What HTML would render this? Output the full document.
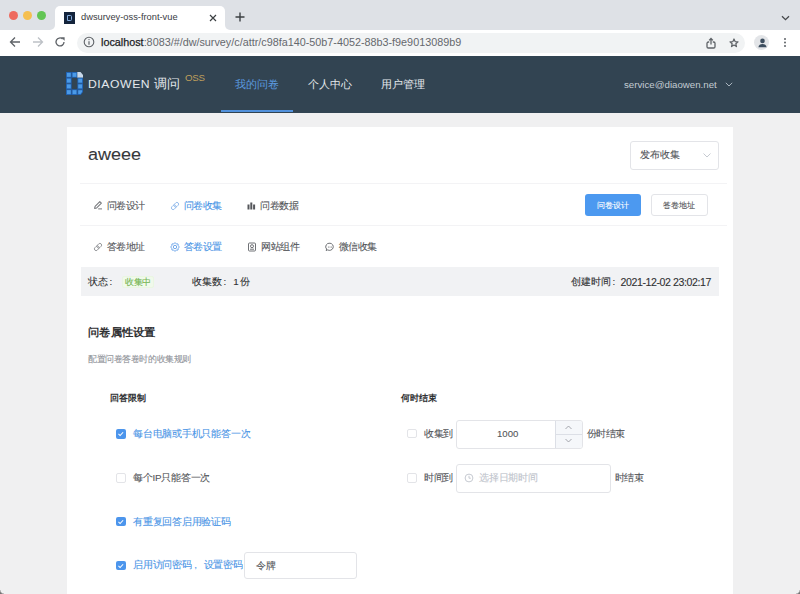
<!DOCTYPE html>
<html><head><meta charset="utf-8">
<style>
*{margin:0;padding:0;box-sizing:border-box}
html,body{width:800px;height:594px;overflow:hidden;background:#f0f0f1;font-family:"Liberation Sans",sans-serif;position:relative}
.a{position:absolute;white-space:nowrap}
</style></head><body>
<!-- ===== browser chrome ===== -->
<div class="a" style="left:0;top:0;width:800px;height:56px;background:#fff"></div><div class="a" style="left:0;top:0;width:55px;height:29.5px;background:#dee1e6;border-radius:0 0 5px 0"></div><div class="a" style="left:224.5px;top:0;width:576px;height:29.5px;background:#dee1e6;border-radius:0 0 0 5px"></div><div class="a" style="left:50px;top:0;width:180px;height:12px;background:#dee1e6"></div>
<div class="a" style="left:9px;top:11px;width:9px;height:9px;border-radius:50%;background:#ee6a5f"></div>
<div class="a" style="left:23px;top:11px;width:9px;height:9px;border-radius:50%;background:#f5bf4f"></div>
<div class="a" style="left:37px;top:11px;width:9px;height:9px;border-radius:50%;background:#62c554"></div>
<div class="a" style="left:55px;top:6px;width:169.5px;height:24px;background:#fff;border-radius:5px 5px 0 0"></div>
<div class="a" style="left:64px;top:12px;width:11px;height:11.5px;background:#14243c"></div>
<div class="a" style="left:67.2px;top:14.8px;width:4.8px;height:6px;border:1.6px solid #86afe0;border-radius:0 1.5px 1.5px 0"></div>
<div class="a" style="left:81px;top:11px;font-size:9.3px;line-height:13px;color:#3a3c3f">dwsurvey-oss-front-vue</div>
<svg class="a" style="left:209px;top:13.5px" width="8" height="8" viewBox="0 0 8 8"><path d="M1 1L7 7M7 1L1 7" stroke="#3c4043" stroke-width="1.2"/></svg>
<svg class="a" style="left:235px;top:12px" width="10" height="10" viewBox="0 0 10 10"><path d="M5 0.5V9.5M0.5 5H9.5" stroke="#3c4043" stroke-width="1.4"/></svg>
<svg class="a" style="left:780.5px;top:15px" width="9" height="6" viewBox="0 0 9 6"><path d="M1 1.2L4.5 4.6L8 1.2" stroke="#45484c" stroke-width="1.3" fill="none"/></svg>

<svg class="a" style="left:9px;top:36px" width="12" height="12" viewBox="0 0 12 12"><path d="M11 6H1.5M6 1.5L1.5 6L6 10.5" stroke="#5f6368" stroke-width="1.3" fill="none"/></svg>
<svg class="a" style="left:32px;top:36px" width="12" height="12" viewBox="0 0 12 12"><path d="M1 6H10.5M6 1.5L10.5 6L6 10.5" stroke="#bdc1c6" stroke-width="1.3" fill="none"/></svg>
<svg class="a" style="left:54px;top:36px" width="12" height="12" viewBox="0 0 12 12"><path d="M10 6A4 4 0 1 1 8.6 2.9" stroke="#5f6368" stroke-width="1.3" fill="none"/><path d="M7 1.2L10.6 1.2L10.6 4.8Z" fill="#5f6368"/></svg>
<div class="a" style="left:77px;top:32.5px;width:668px;height:20px;border-radius:10px;background:#f1f3f4"></div>
<svg class="a" style="left:83px;top:36px" width="12" height="12" viewBox="0 0 12 12"><circle cx="6" cy="6" r="4.8" stroke="#5f6368" stroke-width="1.1" fill="none"/><path d="M6 5.2V8.8" stroke="#5f6368" stroke-width="1.2"/><circle cx="6" cy="3.6" r="0.7" fill="#5f6368"/></svg>
<div class="a" style="left:101px;top:35.5px;font-size:10.8px;line-height:13px;color:#65686d"><span style="color:#202124;-webkit-text-stroke:0.25px #202124">localhost</span>:8083/#/dw/survey/c/attr/c98fa140-50b7-4052-88b3-f9e9013089b9</div>
<svg class="a" style="left:705px;top:36.5px" width="12" height="12" viewBox="0 0 12 12"><path d="M4.2 5H3.3A1.3 1.3 0 0 0 2 6.3V9.7A1.3 1.3 0 0 0 3.3 11H8.7A1.3 1.3 0 0 0 10 9.7V6.3A1.3 1.3 0 0 0 8.7 5H7.8M6 7.6V1.6M4.1 3.4L6 1.5L7.9 3.4" stroke="#5f6368" stroke-width="1.3" fill="none"/></svg>
<svg class="a" style="left:729px;top:38.2px" width="10" height="9.5" viewBox="0 0 12 11.4"><path d="M6 1.2L7.35 4.35L10.8 4.65L8.2 6.9L8.95 10.3L6 8.5L3.05 10.3L3.8 6.9L1.2 4.65L4.65 4.35Z" stroke="#5f6368" stroke-width="1.5" fill="none" stroke-linejoin="round"/></svg>
<div class="a" style="left:754px;top:35px;width:15px;height:15px;border-radius:50%;background:#e3e5e8"></div>
<svg class="a" style="left:755.5px;top:35.5px" width="13" height="13" viewBox="0 0 13 13"><circle cx="6.5" cy="4.9" r="2.3" fill="#3d4e5f"/><path d="M2.4 11.2C2.7 8.7 4.4 7.9 6.5 7.9C8.6 7.9 10.3 8.7 10.6 11.2Z" fill="#3d4e5f"/></svg>
<div class="a" style="left:784px;top:38px;width:2.2px;height:2.2px;border-radius:50%;background:#5f6368;box-shadow:0 3.5px 0 #5f6368,0 7px 0 #5f6368"></div>

<!-- ===== nav ===== -->
<div class="a" style="left:0;top:55.5px;width:800px;height:57px;background:#324452"></div>
<svg class="a" style="left:65.5px;top:71.8px" width="17" height="23" viewBox="0 0 17 23"><rect x="0.00" y="0.00" width="5.67" height="5.75" fill="#2060b0"/><rect x="0.90" y="0.90" width="3.87" height="3.95" fill="#4b9ae6"/><rect x="0.00" y="5.75" width="5.67" height="5.75" fill="#2060b0"/><rect x="0.90" y="6.65" width="3.87" height="3.95" fill="#4b9ae6"/><rect x="0.00" y="11.50" width="5.67" height="5.75" fill="#2060b0"/><rect x="0.90" y="12.40" width="3.87" height="3.95" fill="#4b9ae6"/><rect x="0.00" y="17.25" width="5.67" height="5.75" fill="#2060b0"/><rect x="0.90" y="18.15" width="3.87" height="3.95" fill="#4b9ae6"/><rect x="5.67" y="0.00" width="5.67" height="5.75" fill="#2060b0"/><rect x="6.57" y="0.90" width="3.87" height="3.95" fill="#4b9ae6"/><rect x="5.67" y="17.25" width="5.67" height="5.75" fill="#2060b0"/><rect x="6.57" y="18.15" width="3.87" height="3.95" fill="#4b9ae6"/><path d="M11.33 0.00H14.53L17 2.9V5.75H11.33Z" fill="#c9d9ea"/><rect x="11.33" y="5.75" width="5.67" height="5.75" fill="#2060b0"/><rect x="12.23" y="6.65" width="3.87" height="3.95" fill="#4b9ae6"/><rect x="11.33" y="11.50" width="5.67" height="5.75" fill="#2060b0"/><rect x="12.23" y="12.40" width="3.87" height="3.95" fill="#4b9ae6"/><path d="M11.33 17.25H17V20.05L14.73 23H11.33Z" fill="#2060b0"/><path d="M12.23 18.15H16.1V19.85L14.53 22.1H12.23Z" fill="#4b9ae6"/></svg>
<div class="a" style="left:88px;top:76px;font-size:10.7px;line-height:16px;color:#e3e8ec;letter-spacing:0.5px;transform:scaleX(1.14);transform-origin:0 0;font-weight:500">DIAOWEN</div><div class="a" style="left:154px;top:75.5px;font-size:12.5px;line-height:16px;color:#e3e8ec">调问</div>
<div class="a" style="left:185px;top:72px;font-size:9px;line-height:12px;color:#bf9f5c;letter-spacing:-0.2px;transform:scaleX(1.08);transform-origin:0 0">OSS</div>
<div class="a" style="left:235px;top:77px;font-size:11px;line-height:14px;color:#5b9be0">我的问卷</div>
<div class="a" style="left:308px;top:77px;font-size:11px;line-height:14px;color:#e6eaed">个人中心</div>
<div class="a" style="left:381px;top:77px;font-size:11px;line-height:14px;color:#e6eaed">用户管理</div>
<div class="a" style="left:221px;top:110.3px;width:71.5px;height:2.2px;background:#5291dc"></div>
<div class="a" style="left:624px;top:78px;font-size:9.7px;line-height:13px;color:#c3ccd3">service@diaowen.net</div>
<svg class="a" style="left:724.5px;top:81.5px" width="8" height="5" viewBox="0 0 8 5"><path d="M0.8 0.8L4 4L7.2 0.8" stroke="#aab5bf" stroke-width="1" fill="none"/></svg>

<!-- ===== card ===== -->
<div class="a" style="left:66.8px;top:127px;width:666.5px;height:480px;background:#fff"></div>

<div class="a" style="left:88px;top:142.5px;font-size:16.7px;line-height:24px;color:#37383b;transform:scaleX(1.08);transform-origin:0 0;-webkit-text-stroke-width:0.1px">aweee</div>
<div class="a" style="left:629.5px;top:141px;width:89.5px;height:28.5px;border:1px solid #e3e4e8;border-radius:3px;background:#fff"></div>
<div class="a" style="left:640px;top:148px;font-size:10px;line-height:14px;color:#55575b;-webkit-text-stroke-width:0.1px">发布收集</div>
<svg class="a" style="left:703px;top:152.5px" width="8" height="5" viewBox="0 0 8 5"><path d="M0.5 0.5L4 4L7.5 0.5" stroke="#c0c4cc" stroke-width="0.9" fill="none"/></svg>
<div class="a" style="left:80px;top:183px;width:647px;height:1px;background:#f3f3f5"></div>
<div class="a" style="left:80px;top:225px;width:647px;height:1px;background:#f3f3f5"></div>
<!-- tabs row1 -->
<svg class="a" style="left:92.5px;top:200px" width="10" height="10" viewBox="0 0 10 10"><path d="M1.6 8.4L2.1 6.3L6.8 1.6L8.4 3.2L3.7 7.9L1.6 8.4Z" stroke="#77797d" stroke-width="1.05" fill="none" stroke-linejoin="round"/><path d="M5.2 8.9H9" stroke="#77797d" stroke-width="1"/></svg>
<div class="a" style="left:106.5px;top:198.5px;font-size:9.6px;letter-spacing:-0.4px;line-height:14px;color:#55575b;-webkit-text-stroke-width:0.1px">问卷设计</div>
<svg class="a" style="left:169.5px;top:200.5px" width="10" height="10" viewBox="0 0 10 10"><g transform="rotate(-45 5 5)" stroke="#8ab6ea" stroke-width="0.85" fill="none"><rect x="0.6" y="3.3" width="5.2" height="3.4" rx="1.7"/><rect x="4.2" y="3.3" width="5.2" height="3.4" rx="1.7"/></g></svg>
<div class="a" style="left:183.5px;top:198.5px;font-size:9.6px;letter-spacing:-0.4px;line-height:14px;color:#4b95e6;-webkit-text-stroke-width:0.1px">问卷收集</div>
<svg class="a" style="left:246.5px;top:200.5px" width="9" height="9" viewBox="0 0 9 9"><path d="M1.5 3.6V8.5M4.3 1.6V8.5M7.1 3.6V8.5" stroke="#55575b" stroke-width="2"/></svg>
<div class="a" style="left:260px;top:198.5px;font-size:9.6px;letter-spacing:-0.4px;line-height:14px;color:#55575b;-webkit-text-stroke-width:0.1px">问卷数据</div>
<!-- buttons -->
<div class="a" style="left:585px;top:194px;width:56px;height:22px;border-radius:3px;background:#4c99f0"></div>
<div class="a" style="left:596.5px;top:198.5px;font-size:8.4px;line-height:13px;color:#fff;-webkit-text-stroke-width:0.1px">问卷设计</div>
<div class="a" style="left:651px;top:194px;width:56.5px;height:22px;border:1px solid #e3e4e8;border-radius:3px;background:#fff"></div>
<div class="a" style="left:662.5px;top:198.5px;font-size:8.4px;line-height:13px;color:#55575b;-webkit-text-stroke-width:0.1px">答卷地址</div>
<!-- tabs row2 -->
<svg class="a" style="left:92.5px;top:241.5px" width="10" height="10" viewBox="0 0 10 10"><g transform="rotate(-45 5 5)" stroke="#8a8c90" stroke-width="0.85" fill="none"><rect x="0.6" y="3.3" width="5.2" height="3.4" rx="1.7"/><rect x="4.2" y="3.3" width="5.2" height="3.4" rx="1.7"/></g></svg>
<div class="a" style="left:106.5px;top:239.5px;font-size:9.6px;letter-spacing:-0.4px;line-height:14px;color:#55575b;-webkit-text-stroke-width:0.1px">答卷地址</div>
<svg class="a" style="left:169.5px;top:241.5px" width="10" height="10" viewBox="0 0 10 10"><path d="M5.00 0.70L6.34 1.77L8.04 1.96L8.23 3.66L9.30 5.00L8.23 6.34L8.04 8.04L6.34 8.23L5.00 9.30L3.66 8.23L1.96 8.04L1.77 6.34L0.70 5.00L1.77 3.66L1.96 1.96L3.66 1.77Z" stroke="#5c9be6" stroke-width="0.85" fill="none" stroke-linejoin="round"/><circle cx="5" cy="5" r="1.7" stroke="#5c9be6" stroke-width="0.85" fill="none"/></svg>
<div class="a" style="left:183.5px;top:239.5px;font-size:9.6px;letter-spacing:-0.4px;line-height:14px;color:#4b95e6;-webkit-text-stroke-width:0.1px">答卷设置</div>
<svg class="a" style="left:247px;top:241.5px" width="10" height="10" viewBox="0 0 10 10"><rect x="1.5" y="1" width="7" height="8" rx="1" stroke="#606266" stroke-width="0.9" fill="none"/><circle cx="5" cy="4.2" r="1.5" stroke="#606266" stroke-width="0.9" fill="none"/><path d="M3 7.2H7" stroke="#606266" stroke-width="0.9"/></svg>
<div class="a" style="left:261px;top:239.5px;font-size:9.6px;letter-spacing:-0.4px;line-height:14px;color:#55575b;-webkit-text-stroke-width:0.1px">网站组件</div>
<svg class="a" style="left:324.5px;top:241.5px" width="10" height="10" viewBox="0 0 10 10"><path d="M5 1.2A3.8 3.6 0 1 1 2.6 7.9L1.2 8.6L1.6 7.1A3.8 3.6 0 0 1 5 1.2Z" stroke="#606266" stroke-width="0.9" fill="none"/><circle cx="3.4" cy="4.9" r="0.5" fill="#606266"/><circle cx="5" cy="4.9" r="0.5" fill="#606266"/><circle cx="6.6" cy="4.9" r="0.5" fill="#606266"/></svg>
<div class="a" style="left:338.5px;top:239.5px;font-size:9.6px;letter-spacing:-0.4px;line-height:14px;color:#55575b;-webkit-text-stroke-width:0.1px">微信收集</div>
<!-- status bar -->
<div class="a" style="left:80.5px;top:266.5px;width:638.5px;height:29.5px;background:#f1f2f4"></div>
<div class="a" style="left:88px;top:275px;font-size:9.8px;line-height:14px;color:#303133;-webkit-text-stroke-width:0.1px">状态<span style="margin-left:1.5px">:</span></div>
<div class="a" style="left:121.5px;top:275.5px;width:32px;height:12px;background:#f0f9eb;border:1px solid #eaf6e2;border-radius:2px"></div>
<div class="a" style="left:125px;top:275.5px;font-size:8.6px;letter-spacing:-0.3px;line-height:13px;color:#72b34f;-webkit-text-stroke-width:0.1px">收集中</div>
<div class="a" style="left:192px;top:275px;font-size:9.8px;line-height:14px;color:#303133;-webkit-text-stroke-width:0.1px">收集数<span style="margin-left:1.5px">:</span><span style="margin-left:7px">1</span><span style="margin-left:1.5px">份</span></div>
<div class="a" style="left:571px;top:275px;font-size:9.8px;line-height:14px;color:#303133;-webkit-text-stroke-width:0.1px">创建时间<span style="margin-left:1.5px">:</span></div><div class="a" style="left:620.5px;top:274.5px;font-size:10.6px;letter-spacing:-0.42px;line-height:14px;color:#303133;-webkit-text-stroke-width:0.1px">2021-12-02 23:02:17</div>
<!-- settings -->
<div class="a" style="left:88px;top:324px;font-size:11px;line-height:16px;color:#303133;font-weight:bold;transform:scaleX(1.025);transform-origin:0 0">问卷属性设置</div>
<div class="a" style="left:88px;top:352.5px;font-size:8.6px;letter-spacing:-0.43px;line-height:13px;color:#909399;-webkit-text-stroke-width:0.1px">配置问卷答卷时的收集规则</div>
<div class="a" style="left:109.5px;top:391px;font-size:9.3px;line-height:14px;color:#303133;font-weight:bold">回答限制</div>
<div class="a" style="left:400.5px;top:391px;font-size:9.3px;line-height:14px;color:#303133;font-weight:bold">何时结束</div>
<div class="a" style="left:116px;top:428.75px;width:9.75px;height:9.75px;border-radius:2px;background:#4c95ec"></div><svg class="a" style="left:116px;top:428.75px" width="9.5" height="9.5" viewBox="0 0 10 10"><path d="M2.6 5.2L4.3 6.9L7.5 3.4" stroke="#fff" stroke-width="1.1" fill="none"/></svg>
<div class="a" style="left:133px;top:427px;font-size:9.8px;letter-spacing:-0.22px;line-height:14px;color:#4b95e6;-webkit-text-stroke-width:0.1px">每台电脑或手机只能答一次</div>
<div class="a" style="left:116px;top:473px;width:9.5px;height:9.5px;border-radius:2px;border:1px solid #e3e4e8;background:#fff"></div>
<div class="a" style="left:133px;top:470.5px;font-size:9.8px;letter-spacing:-0.22px;line-height:14px;color:#55575b;-webkit-text-stroke-width:0.1px">每个IP只能答一次</div>
<div class="a" style="left:116px;top:516.5px;width:9.75px;height:9.75px;border-radius:2px;background:#4c95ec"></div><svg class="a" style="left:116px;top:516.5px" width="9.5" height="9.5" viewBox="0 0 10 10"><path d="M2.6 5.2L4.3 6.9L7.5 3.4" stroke="#fff" stroke-width="1.1" fill="none"/></svg>
<div class="a" style="left:133px;top:514.5px;font-size:9.8px;letter-spacing:-0.22px;line-height:14px;color:#4b95e6;-webkit-text-stroke-width:0.1px">有重复回答启用验证码</div>
<div class="a" style="left:116px;top:560.5px;width:9.75px;height:9.75px;border-radius:2px;background:#4c95ec"></div><svg class="a" style="left:116px;top:560.5px" width="9.5" height="9.5" viewBox="0 0 10 10"><path d="M2.6 5.2L4.3 6.9L7.5 3.4" stroke="#fff" stroke-width="1.1" fill="none"/></svg>
<div class="a" style="left:133px;top:558px;font-size:9.8px;letter-spacing:-0.22px;line-height:14px;color:#4b95e6;-webkit-text-stroke-width:0.1px">启用访问密码<span style="margin-left:2.5px">,</span><span style="margin-left:7px">设置密码</span></div>
<div class="a" style="left:244px;top:552px;width:113px;height:27px;border:1px solid #e3e4e8;border-radius:3px;background:#fff"></div>
<div class="a" style="left:256px;top:558.5px;font-size:9.8px;line-height:14px;color:#55575b;-webkit-text-stroke-width:0.1px">令牌</div>
<div class="a" style="left:407px;top:428.75px;width:9.5px;height:9.5px;border-radius:2px;border:1px solid #e3e4e8;background:#fff"></div>
<div class="a" style="left:424px;top:427px;font-size:9.6px;letter-spacing:-0.4px;line-height:14px;color:#55575b;-webkit-text-stroke-width:0.1px">收集到</div>
<div class="a" style="left:456px;top:420px;width:127px;height:28.5px;border:1px solid #e3e4e8;border-radius:3px;background:#fff"></div>
<div class="a" style="left:554.5px;top:421px;width:27.5px;height:26.5px;background:#f5f7fa;border-left:1px solid #dcdfe6;border-radius:0 2px 2px 0"></div>
<div class="a" style="left:555px;top:434px;width:27px;height:1px;background:#dcdfe6"></div>
<svg class="a" style="left:565px;top:425px" width="7" height="5" viewBox="0 0 7 5"><path d="M0.5 4L3.5 1L6.5 4" stroke="#909399" stroke-width="0.8" fill="none"/></svg>
<svg class="a" style="left:565px;top:438px" width="7" height="5" viewBox="0 0 7 5"><path d="M0.5 1L3.5 4L6.5 1" stroke="#909399" stroke-width="0.8" fill="none"/></svg>
<div class="a" style="left:497px;top:427px;font-size:9.6px;line-height:14px;color:#55575b;-webkit-text-stroke-width:0.1px">1000</div>
<div class="a" style="left:586.5px;top:427px;font-size:9.6px;letter-spacing:-0.4px;line-height:14px;color:#55575b;-webkit-text-stroke-width:0.1px">份时结束</div>
<div class="a" style="left:407px;top:473px;width:9.5px;height:9.5px;border-radius:2px;border:1px solid #e3e4e8;background:#fff"></div>
<div class="a" style="left:424px;top:470.5px;font-size:9.6px;letter-spacing:-0.4px;line-height:14px;color:#55575b;-webkit-text-stroke-width:0.1px">时间到</div>
<div class="a" style="left:456px;top:464px;width:155px;height:28.5px;border:1px solid #e3e4e8;border-radius:3px;background:#fff"></div>
<svg class="a" style="left:464px;top:473px" width="10" height="10" viewBox="0 0 10 10"><circle cx="5" cy="5" r="3.9" stroke="#c0c4cc" stroke-width="0.9" fill="none"/><path d="M5 2.8V5.2H6.8" stroke="#c0c4cc" stroke-width="0.9" fill="none"/></svg>
<div class="a" style="left:479px;top:471px;font-size:9.6px;letter-spacing:-0.2px;line-height:14px;color:#c0c4cc;-webkit-text-stroke-width:0.1px">选择日期时间</div>
<div class="a" style="left:614.5px;top:470.5px;font-size:9.6px;letter-spacing:-0.4px;line-height:14px;color:#55575b;-webkit-text-stroke-width:0.1px">时结束</div>
<div class="a" style="left:0;top:590px;width:4px;height:4px;background:radial-gradient(circle at 4px 0,rgba(0,0,0,0) 3px,rgba(60,60,60,0.7) 4.5px)"></div><div class="a" style="left:796px;top:590px;width:4px;height:4px;background:radial-gradient(circle at 0 0,rgba(0,0,0,0) 3px,rgba(60,60,60,0.7) 4.5px)"></div>
</body></html>
